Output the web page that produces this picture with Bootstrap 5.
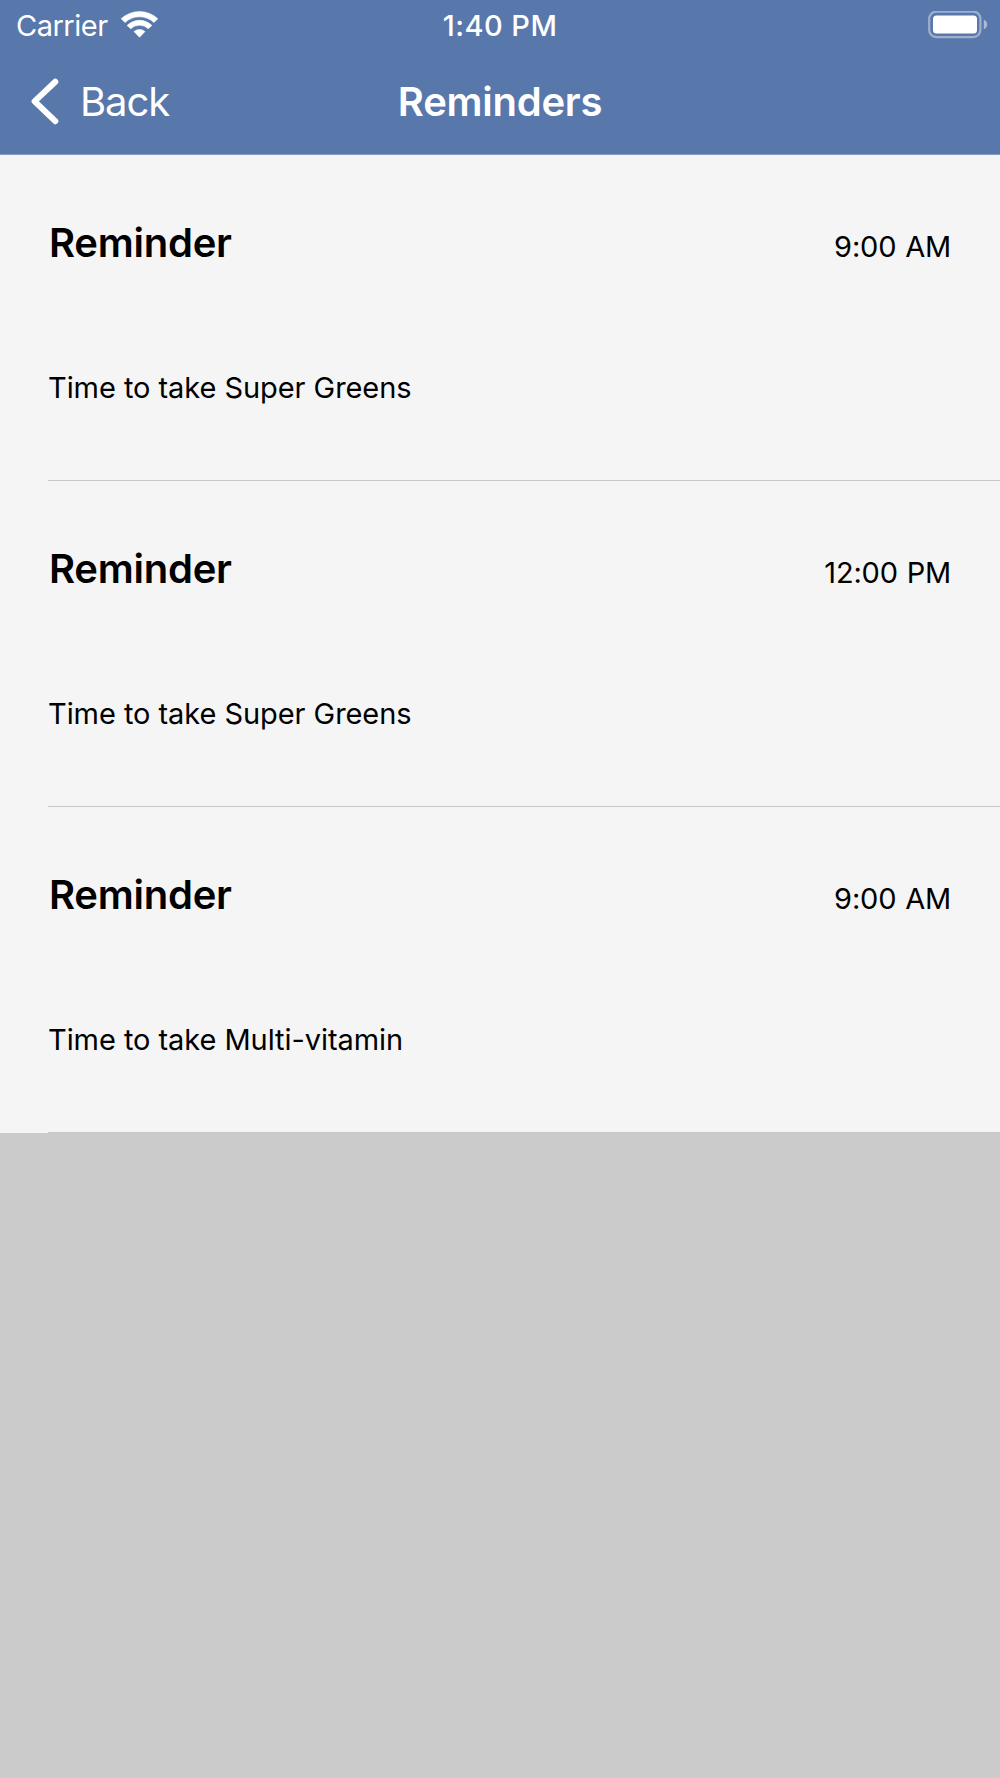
<!DOCTYPE html>
<html lang="en">
<head>
<meta charset="utf-8">
<meta name="viewport" content="width=device-width, initial-scale=1">
<title>Reminders</title>
<link href="https://cdn.jsdelivr.net/npm/bootstrap@5.3.0/dist/css/bootstrap.min.css" rel="stylesheet">
<style>
  body { font-family: Inter, "Liberation Sans", sans-serif; background: #cbcbcb; color: #000; font-size: 29px; min-height: 1778px; }
  svg { display: block; flex: none; }
  .app-header { background: #5877ab; color: #fff; height: 155px; border-bottom: 1px solid #8299c1; }
  .status-bar { height: 50px; line-height: 51px; padding: 0 12px; }
  .status-side, .nav-side { flex: 1 1 0; }
  .carrier { letter-spacing: -.5px; margin: 0 12px 0 4px; }
  .clock { font-weight: 500; letter-spacing: .48px; }
  .nav-bar { height: 104px; line-height: 104px; font-size: 40px; padding: 0 31px; }
  .back-link { color: #fff; letter-spacing: -1.05px; gap: 21px; }
  .page-title { font-size: 40px; font-weight: 600; letter-spacing: -.25px; line-height: inherit; }
  .reminder-list { --bs-list-group-bg: #f5f5f5; --bs-list-group-color: #000; background: #f5f5f5; }
  .reminder-row { height: 326px; padding: 63px 0 0 48px; border: 0; background: #f5f5f5; }
  .reminder-body { height: 263px; border-bottom: 1px solid #c8c8c8; padding-right: 49px; }
  .reminder-head { height: 145px; line-height: 50px; }
  .reminder-title { font-size: 40px; font-weight: 600; letter-spacing: -.25px; line-height: 50px; padding-left: 1px; }
  .reminder-time { letter-spacing: -.2px; word-spacing: 1px; }
  .reminder-text { line-height: 50px; letter-spacing: -.06px; }
</style>
</head>
<body>
<header class="app-header">
  <div class="status-bar d-flex align-items-center">
    <div class="status-side d-flex align-items-center">
      <span class="carrier">Carrier</span>
      <svg width="38" height="30" viewBox="119 9.5 38 30" fill="#fff" stroke="#fff" stroke-width=".6" stroke-linejoin="round" aria-hidden="true">
        <path d="M120.2 18.2A27 27 0 0 1 156.8 18.2L153 22A21.3 21.3 0 0 0 124 22Z"/>
        <path d="M126.1 27A17.5 17.5 0 0 1 150.9 27L147.2 30.2A12.6 12.6 0 0 0 129.8 30.2Z" transform="translate(0 -2)"/>
        <path d="M133 31.1A8.3 8.3 0 0 1 144 31.1L138.5 36.7Z"/>
      </svg>
    </div>
    <span class="clock">1:40 PM</span>
    <div class="status-side d-flex justify-content-end">
      <svg width="60" height="28" viewBox="928 10.8 60 28" aria-hidden="true">
        <rect x="929.2" y="11.5" width="51.2" height="25.4" rx="7" fill="none" stroke="#fff" stroke-opacity=".42" stroke-width="2.2"/>
        <rect x="933" y="15.2" width="44" height="18" rx="3.5" fill="#fff"/>
        <path d="M983.8 19.5Q987.2 21 987.2 24.2Q987.2 27.5 983.8 29Z" fill="#fff" fill-opacity=".5"/>
      </svg>
    </div>
  </div>
  <nav class="nav-bar d-flex align-items-center">
    <div class="nav-side d-flex">
      <a href="#" class="back-link d-flex align-items-center text-decoration-none">
        <svg width="28" height="48" viewBox="32 77.8 28 48" fill="none" stroke="#fff" stroke-width="6" stroke-linecap="round" stroke-linejoin="round" aria-hidden="true"><path d="M56.3 81.6L35.6 101.2L56.3 121"/></svg>
        <span>Back</span>
      </a>
    </div>
    <h1 class="page-title m-0">Reminders</h1>
    <div class="nav-side"></div>
  </nav>
</header>
<main class="reminder-list list-group list-group-flush rounded-0">
  <article class="reminder-row list-group-item">
    <div class="reminder-body">
      <div class="reminder-head d-flex justify-content-between align-items-baseline">
        <h2 class="reminder-title m-0">Reminder</h2><span class="reminder-time">9:00 AM</span>
      </div>
      <p class="reminder-text m-0">Time to take Super Greens</p>
    </div>
  </article>
  <article class="reminder-row list-group-item">
    <div class="reminder-body">
      <div class="reminder-head d-flex justify-content-between align-items-baseline">
        <h2 class="reminder-title m-0">Reminder</h2><span class="reminder-time">12:00 PM</span>
      </div>
      <p class="reminder-text m-0">Time to take Super Greens</p>
    </div>
  </article>
  <article class="reminder-row list-group-item">
    <div class="reminder-body">
      <div class="reminder-head d-flex justify-content-between align-items-baseline">
        <h2 class="reminder-title m-0">Reminder</h2><span class="reminder-time">9:00 AM</span>
      </div>
      <p class="reminder-text m-0">Time to take Multi-vitamin</p>
    </div>
  </article>
</main>
<script src="https://cdn.jsdelivr.net/npm/bootstrap@5.3.0/dist/js/bootstrap.bundle.min.js"></script>
</body>
</html>
